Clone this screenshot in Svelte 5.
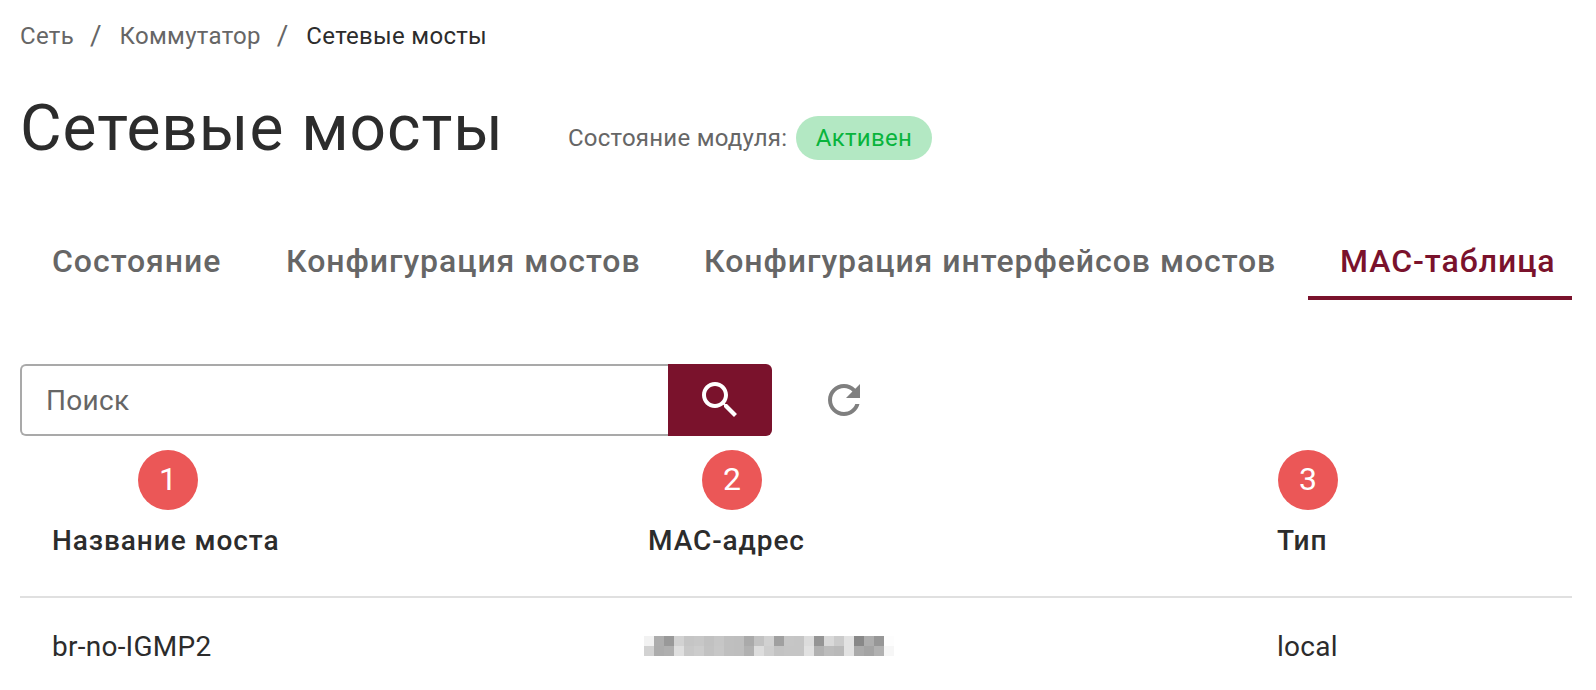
<script>
  const crumbs = ['Сеть', 'Коммутатор'];
  const tabs = [
    { label: 'Состояние', width: 234 },
    { label: 'Конфигурация мостов', width: 418 },
    { label: 'Конфигурация интерфейсов мостов', width: 636 },
    { label: 'MAC-таблица', width: 278, active: true },
  ];
  const columns = [
    { n: 1, title: 'Название моста' },
    { n: 2, title: 'MAC-адрес' },
    { n: 3, title: 'Тип' },
  ];
  const mosaic = [
    ['f2','ad','99','d2','c5','c7','c1','c6','bf','be','aa','c2','d1','a0','c6','c5','dc','95','d9','cb','e2','88','ad','97','fd'],
    ['d2','ac','af','df','c8','cc','c2','c7','bf','be','b1','dd','ce','c3','c5','c5','e1','b1','bc','b9','e2','aa','a4','b1','f6'],
  ];
</script>

<main>
  <nav class="crumbs">
    {#each crumbs as c}
      <a href="#top">{c}</a><span class="sep">/</span>
    {/each}
    <span class="current">Сетевые мосты</span>
  </nav>

  <header>
    <h1>Сетевые мосты</h1>
    <span class="state">Состояние модуля:</span>
    <span class="pill">Активен</span>
  </header>

  <div class="tabs">
    {#each tabs as t}
      <div class="tab" class:active={t.active} style="width: {t.width}px">{t.label}</div>
    {/each}
  </div>

  <div class="tools">
    <div class="field">Поиск</div>
    <button class="find" aria-label="Поиск">
      <svg viewBox="0 0 24 24"><path d="M15.5 14h-.79l-.28-.27C15.41 12.59 16 11.11 16 9.5 16 5.91 13.09 3 9.5 3S3 5.91 3 9.5 5.91 16 9.5 16c1.61 0 3.09-.59 4.23-1.57l.27.28v.79l5 4.99L20.49 19l-4.99-5zm-6 0C7.01 14 5 11.99 5 9.5S7.01 5 9.5 5 14 7.01 14 9.5 11.99 14 9.5 14z" /></svg>
    </button>
    <svg class="refresh" viewBox="0 0 24 24"><path d="M17.65 6.35C16.2 4.9 14.21 4 12 4c-4.42 0-7.99 3.58-7.99 8s3.57 8 7.99 8c3.73 0 6.84-2.55 7.73-6h-2.08c-.82 2.33-3.04 4-5.65 4-3.31 0-6-2.69-6-6s2.69-6 6-6c1.66 0 3.14.69 4.22 1.78L13 11h7V4l-2.35 2.35z" /></svg>
  </div>

  <div class="row head">
    {#each columns as col}
      <div class="cell"><b class="badge b{col.n}">{col.n}</b><span>{col.title}</span></div>
    {/each}
  </div>
  <div class="row body">
    <div class="cell name">br-no-IGMP2</div>
    <div class="cell">
      <div class="mosaic">
        {#each mosaic.flat() as g}<i style="background: #{g}{g}{g}"></i>{/each}
      </div>
    </div>
    <div class="cell">local</div>
  </div>
</main>

<style>
  :global(body) { margin: 0; background: #fff; overflow: hidden; }
  main {
    box-sizing: border-box;
    width: 1596px;
    height: 690px;
    padding: 18px 24px 0 20px;
    overflow: hidden;
    font-family: Roboto, sans-serif;
    color: #2c2c2c;
  }
  .crumbs { display: flex; height: 36px; line-height: 36px; font-size: 24px; color: #666; letter-spacing: 0.3px; white-space: nowrap; }
  .crumbs a { color: inherit; text-decoration: none; }
  .sep { margin: 0 18px 0 16px; font-size: 28px; letter-spacing: 0; }
  .current { color: #2c2c2c; }
  header { display: flex; height: 76px; margin-top: 36px; white-space: nowrap; }
  h1 { margin: 0; width: 548px; font-size: 64px; line-height: 78px; font-weight: 400; letter-spacing: 0.95px; }
  .state { width: 228px; font-size: 24px; line-height: 28px; padding-top: 34px; color: #666; letter-spacing: 0.25px; }
  .pill { box-sizing: border-box; width: 136px; height: 44px; margin-top: 26px; border-radius: 22px; background: #b3e8c3; color: #08b43c; font-size: 24px; line-height: 44px; text-align: center; letter-spacing: 0.3px; }
  .tabs { display: flex; width: 1552px; height: 84px; margin-top: 50px; overflow: hidden; }
  .tab { box-sizing: border-box; flex: none; height: 84px; padding: 0 32px; font-size: 32px; font-weight: 500; line-height: 90px; letter-spacing: 0.96px; color: #666; white-space: nowrap; }
  .active { color: #7a122c; border-bottom: 4px solid #7a122c; }
  .tools { display: flex; height: 72px; margin-top: 64px; align-items: center; }
  .field { box-sizing: border-box; width: 648px; height: 72px; padding-left: 24px; border: 2px solid #a9a9a9; border-right: 0; border-radius: 6px 0 0 6px; font-size: 28px; line-height: 70px; letter-spacing: 0.3px; color: #666; }
  .find { width: 104px; height: 72px; padding: 0; border: 0; border-radius: 0 6px 6px 0; background: #7a122c; display: flex; align-items: center; justify-content: center; }
  svg { width: 48px; height: 48px; fill: #fff; }
  .refresh { margin-left: 48px; fill: #7f7f7f; }
  .row { display: grid; grid-template-columns: 596px 629px 1fr; width: 1552px; font-size: 28px; white-space: nowrap; }
  .cell { position: relative; padding-left: 32px; }
  .head { box-sizing: border-box; height: 162px; border-bottom: 2px solid #e0e0e0; font-weight: 500; letter-spacing: 0.92px; }
  .head span { display: block; padding-top: 89px; line-height: 32px; }
  .badge { position: absolute; top: 14px; width: 60px; height: 60px; border-radius: 50%; background: #eb5757; color: #fff; font-size: 32px; line-height: 59px; font-weight: 400; text-align: center; letter-spacing: 0; }
  .b1 { left: 118px; }
  .b2 { left: 86px; }
  .b3 { left: 33px; }
  .body { line-height: 32px; padding-top: 32px; line-height: 34px; letter-spacing: 0.25px; }
  .mosaic { display: grid; grid-template-columns: repeat(25, 10px); grid-auto-rows: 10px; margin: 6px 0 0 -4px; }
</style>
